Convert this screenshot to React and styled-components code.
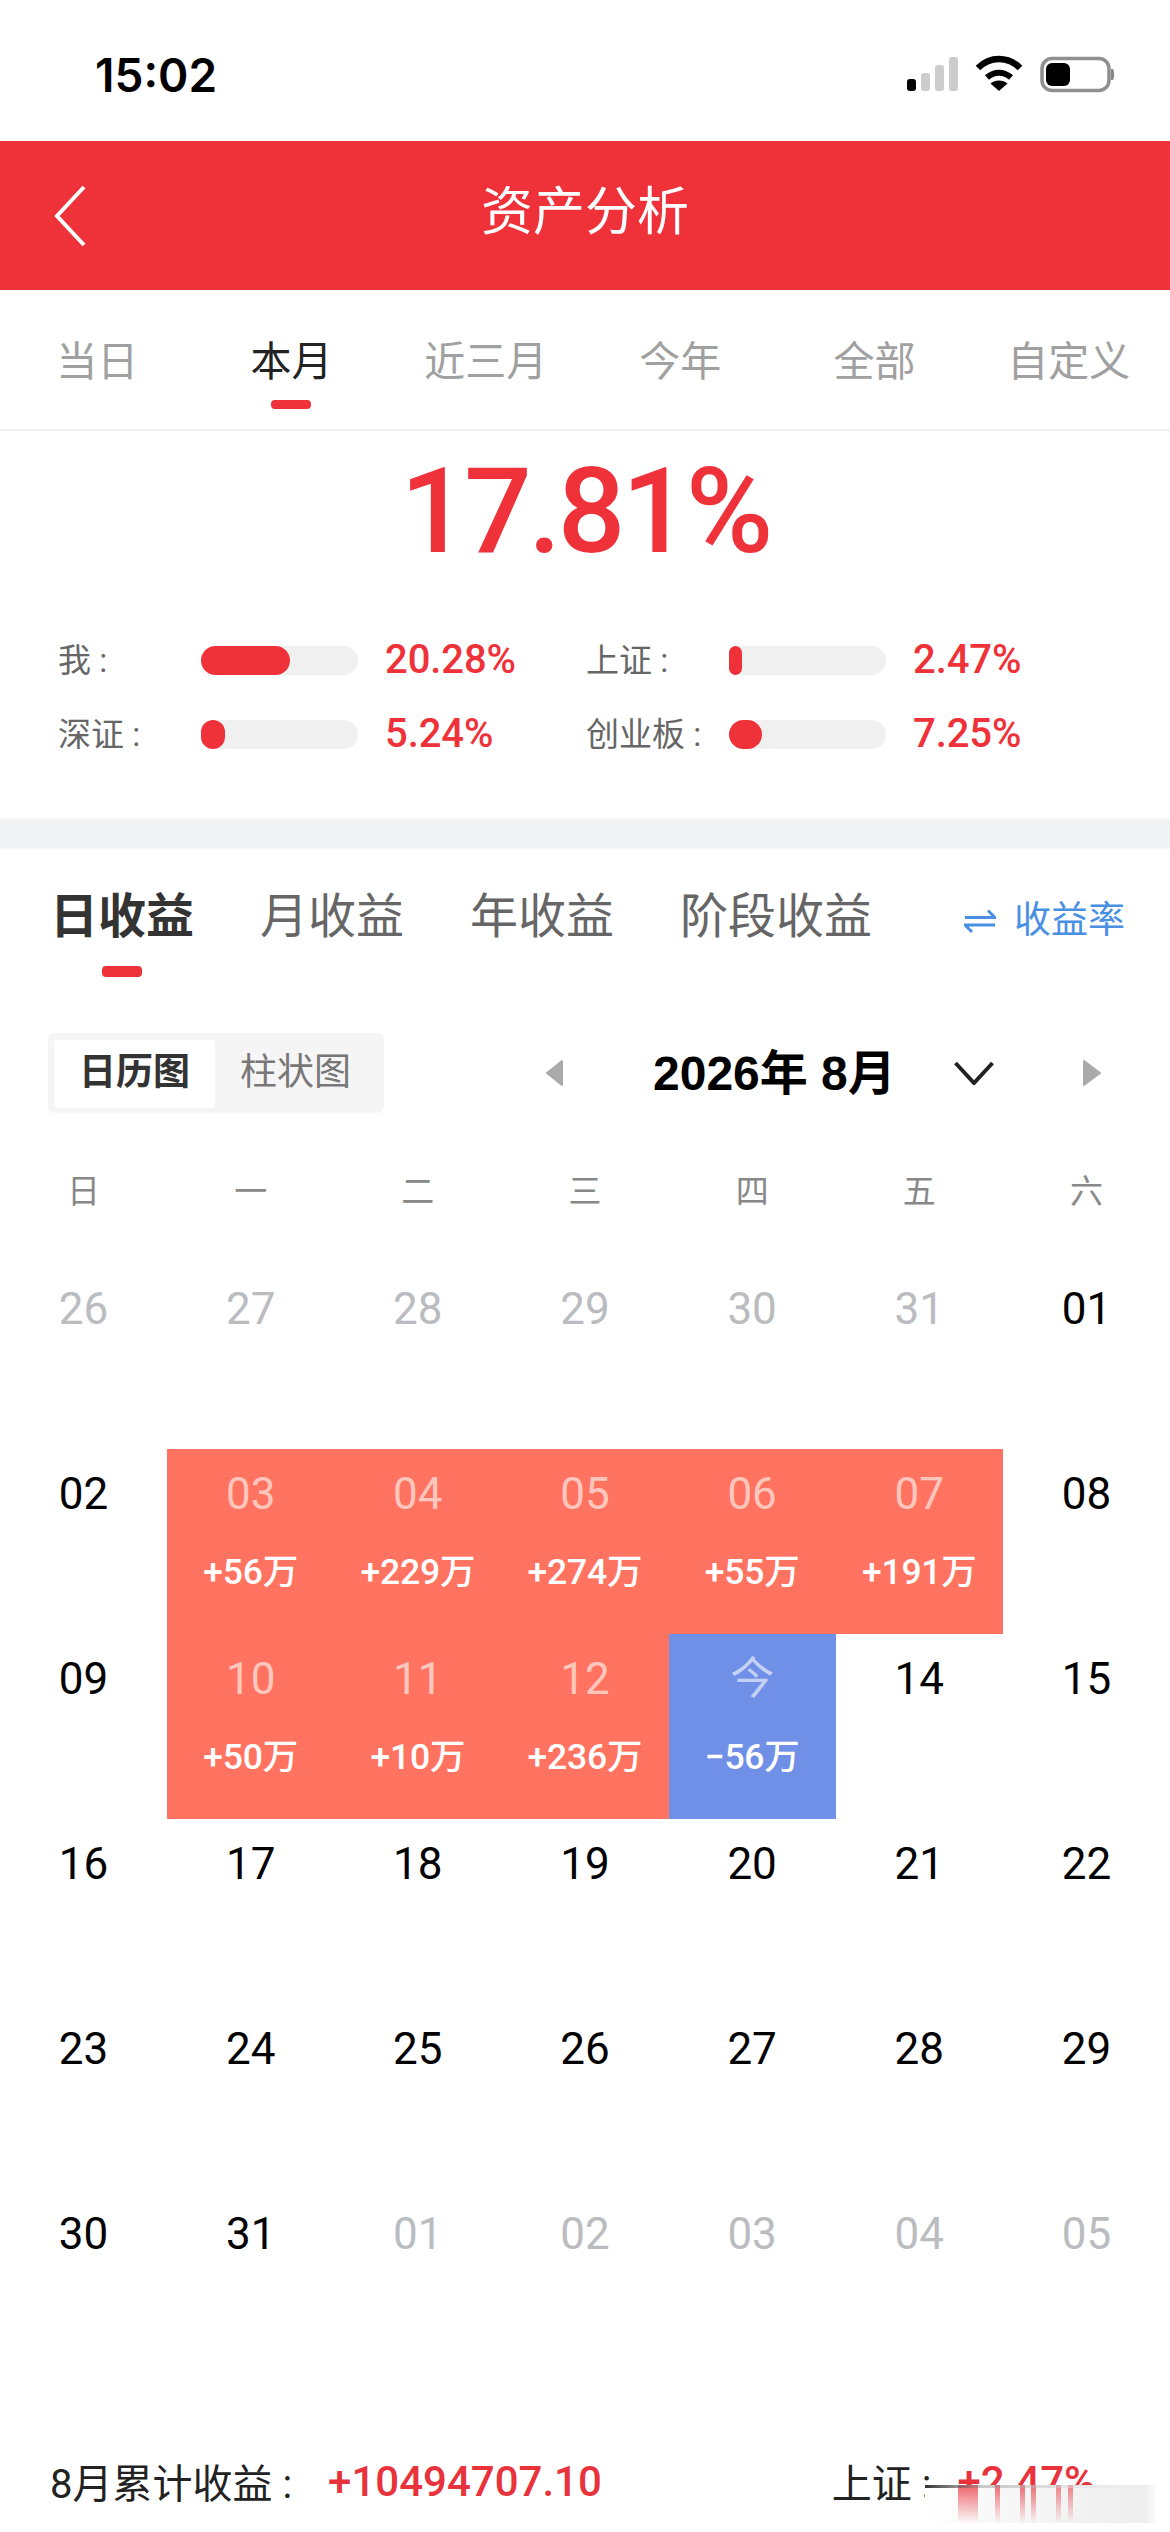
import React from 'react'
import styled, { createGlobalStyle } from 'styled-components'

const GlobalStyle = createGlobalStyle`
  html, body { margin: 0; padding: 0; background: #fff; }
  * { box-sizing: border-box; }
  body { font-family: Roboto, "Noto Sans CJK SC", sans-serif; }
`

const RED = '#ef323a'

const Page = styled.div`
  width: 1170px;
  height: 2532px;
  overflow: hidden;
  background: #fff;
  display: flex;
  flex-direction: column;
`

const StatusBar = styled.div`
  height: 141px;
  padding: 50px 55px 0 95px;
  display: flex;
  justify-content: space-between;
  align-items: flex-start;
`
const Clock = styled.span`
  font-family: Inter, sans-serif;
  font-weight: 600;
  font-size: 46px;
  line-height: 50px;
  color: #000;
`
const StatusIcons = styled.svg`
  display: block;
  margin-top: 5px;
`

const Header = styled.header`
  height: 149px;
  background: ${RED};
  display: grid;
  grid-template-columns: 1fr auto 1fr;
  align-items: center;
  padding: 0 54px;
`
const HeaderTitle = styled.h1`
  margin: -6px 0 0;
  font-size: 52px;
  font-weight: 400;
  line-height: 60px;
  color: #fff;
`

const RangeTabs = styled.nav`
  height: 141px;
  padding-right: 4px;
  display: grid;
  grid-template-columns: repeat(6, 1fr);
  border-bottom: 2px solid #f0f0f0;
`
const RangeTab = styled.div`
  display: flex;
  flex-direction: column;
  align-items: center;
  padding-top: 42px;
  font-size: 41px;
  line-height: 60px;
  color: ${p => (p.$active ? '#222' : '#a0a0a0')};
`
const Indicator = styled.i`
  display: block;
  width: ${p => p.$w || 40}px;
  height: ${p => p.$h || 9}px;
  margin-top: ${p => p.$top || 8}px;
  border-radius: 4px;
  background: ${RED};
`

const Summary = styled.section`
  height: 388px;
  display: flex;
  flex-direction: column;
`
const BigValue = styled.div`
  height: 162px;
  margin-bottom: 30px;
  text-align: center;
  font-size: 119px;
  font-weight: 500;
  line-height: 162px;
  letter-spacing: -3.6px;
  color: ${RED};
`
const StatGrid = styled.div`
  display: grid;
  grid-template-columns: 528px 1fr;
  grid-auto-rows: 74px;
  padding-left: 58px;
`
const Stat = styled.div`
  display: grid;
  grid-template-columns: 143px 157px auto;
  align-items: center;
`
const StatLabel = styled.span`
  margin-bottom: 5px;
  font-size: 33px;
  color: #666;
`
const Track = styled.div`
  height: 29px;
  border-radius: 15px;
  background: #f0f0f0;
`
const Fill = styled.div`
  height: 100%;
  border-radius: 15px;
  background: ${RED};
`
const StatValue = styled.span`
  margin-left: 27px;
  margin-bottom: 2px;
  font-size: 40px;
  font-weight: 500;
  letter-spacing: -0.1px;
  color: ${RED};
`

const Band = styled.div`
  height: 30px;
  background: #f2f3f5;
`

const ProfitTabs = styled.div`
  display: flex;
  align-items: flex-start;
  gap: 66px;
  padding: 36px 45px 0 50px;
`
const ProfitTab = styled.div`
  display: flex;
  flex-direction: column;
  align-items: center;
  font-size: 48px;
  line-height: 64px;
  font-weight: ${p => (p.$active ? 700 : 400)};
  color: ${p => (p.$active ? '#333' : '#666')};
`
const RateSwitch = styled.div`
  margin-left: auto;
  padding-top: 4px;
  display: flex;
  align-items: center;
  gap: 18px;
  font-size: 37px;
  line-height: 64px;
  color: #4a90e2;
`

const Toolbar = styled.div`
  margin-top: 56px;
  height: 80px;
  padding-left: 48px;
  display: flex;
  align-items: center;
`
const Toggle = styled.div`
  width: 336px;
  height: 80px;
  padding: 7px 0 5px 6px;
  display: flex;
  border-radius: 6px;
  background: #f5f5f5;
`
const ToggleItem = styled.div`
  width: 161px;
  border-radius: 4px;
  text-align: center;
  font-size: 37px;
  line-height: 66px;
  background: ${p => (p.$active ? '#fff' : 'transparent')};
  color: ${p => (p.$active ? '#333' : '#777')};
  font-weight: ${p => (p.$active ? 700 : 400)};
`
const NavIcon = styled.svg`
  display: block;
  flex: none;
  margin-left: ${p => p.$left}px;
`
const MonthTitle = styled.div`
  margin: 2px 0 0 89px;
  width: 237px;
  font-family: "Liberation Sans", "Noto Sans CJK SC", sans-serif;
  font-size: 48px;
  font-weight: 700;
  line-height: 60px;
  white-space: nowrap;
  color: #000;
`

const WeekRow = styled.div`
  margin-top: 47px;
  display: grid;
  grid-template-columns: repeat(7, 1fr);
  height: 64px;
  text-align: center;
  font-size: 33px;
  line-height: 64px;
  color: #888;
`

const CalendarGrid = styled.div`
  margin-top: 40px;
  display: grid;
  grid-template-columns: repeat(7, 1fr);
  grid-auto-rows: 185px;
`
const Cell = styled.div`
  display: flex;
  flex-direction: column;
  align-items: center;
  padding-top: 15px;
  background: ${p => (p.$tone === 'up' ? '#ff7360' : p.$tone === 'down' ? '#6f90e6' : 'transparent')};
`
const DayNum = styled.span`
  font-size: 44px;
  line-height: 60px;
  color: ${p => (p.$tone ? 'rgba(255,255,255,.62)' : p.$muted ? '#bbbcc0' : '#000')};
`
const Amount = styled.span`
  margin-top: 23px;
  font-size: 35.5px;
  font-weight: 500;
  line-height: 50px;
  letter-spacing: -0.2px;
  color: #fff;
`

const Footer = styled.div`
  position: relative;
  margin-top: 77px;
  height: 60px;
  padding-left: 50px;
  display: flex;
  align-items: center;
  font-size: 40px;
  color: #222;
`
const FooterValue = styled.span`
  margin-left: ${p => p.$left}px;
  font-size: 42px;
  font-weight: 500;
  color: #e8323c;
  white-space: nowrap;
`
const FooterLabel = styled.span`
  margin-left: ${p => p.$left || 0}px;
  white-space: nowrap;
`
// the smeared watermark over the bottom right corner, text below it runs out as streaks
const Smear = styled.div`
  position: absolute;
  left: 925px;
  top: 34px;
  width: 232px;
  height: 38px;
  background:
    linear-gradient(to right, #333, rgba(120,120,120,.4) 50px, rgba(220,220,220,.5) 150px, transparent 220px) 0 0 / 100% 3px no-repeat,
    linear-gradient(to bottom, rgba(232,50,60,.75), rgba(232,50,60,0)) 33px 0 / 20px 100% no-repeat,
    linear-gradient(to bottom, rgba(232,50,60,.7), rgba(232,50,60,0)) 70px 0 / 5px 100% no-repeat,
    linear-gradient(to bottom, rgba(232,50,60,.7), rgba(232,50,60,0)) 95px 0 / 5px 100% no-repeat,
    linear-gradient(to bottom, rgba(232,50,60,.7), rgba(232,50,60,0)) 106px 0 / 5px 100% no-repeat,
    linear-gradient(to bottom, rgba(232,50,60,.6), rgba(232,50,60,0)) 131px 0 / 5px 100% no-repeat,
    linear-gradient(to bottom, rgba(232,50,60,.6), rgba(232,50,60,0)) 143px 0 / 5px 100% no-repeat,
    linear-gradient(to right, #fff, #f6f6f6 40%, #eee 95%, #fff);
`

const WEEK = ['日', '一', '二', '三', '四', '五', '六']
const RANGES = ['当日', '本月', '近三月', '今年', '全部', '自定义']
const PROFITS = ['日收益', '月收益', '年收益', '阶段收益']

const STATS = [
  { label: '我 :', pct: 57, value: '20.28%' },
  { label: '上证 :', pct: 8, value: '2.47%' },
  { label: '深证 :', pct: 15, value: '5.24%' },
  { label: '创业板 :', pct: 21, value: '7.25%' },
]

const DAYS = [
  ['26', 1], ['27', 1], ['28', 1], ['29', 1], ['30', 1], ['31', 1], ['01'],
  ['02'], ['03', 0, 'up', '+56万'], ['04', 0, 'up', '+229万'], ['05', 0, 'up', '+274万'], ['06', 0, 'up', '+55万'], ['07', 0, 'up', '+191万'], ['08'],
  ['09'], ['10', 0, 'up', '+50万'], ['11', 0, 'up', '+10万'], ['12', 0, 'up', '+236万'], ['今', 0, 'down', '−56万'], ['14'], ['15'],
  ['16'], ['17'], ['18'], ['19'], ['20'], ['21'], ['22'],
  ['23'], ['24'], ['25'], ['26'], ['27'], ['28'], ['29'],
  ['30'], ['31'], ['01', 1], ['02', 1], ['03', 1], ['04', 1], ['05', 1],
]

function StatusGlyphs() {
  return (
    <StatusIcons width="210" height="40" viewBox="0 0 210 40">
      <rect x="2" y="24" width="9" height="12" rx="3" fill="#000" />
      <rect x="16" y="18" width="9" height="18" rx="3" fill="#ccc" />
      <rect x="30" y="10" width="9" height="26" rx="3" fill="#ccc" />
      <rect x="44" y="2" width="9" height="34" rx="3" fill="#ccc" />
      <g transform="translate(70 0)">
        <path d="M3 13 C15 1 33 1 45 13" fill="none" stroke="#000" strokeWidth="6.5" />
        <path d="M12 22.5 C19 16 29 16 36 22.5" fill="none" stroke="#000" strokeWidth="6" />
        <path d="M24 36 L15.5 28.5 C20 24.5 28 24.5 32.5 28.5 Z" fill="#000" />
      </g>
      <rect x="137" y="3.5" width="67" height="32" rx="10" fill="#fff" stroke="#8f8f8f" strokeWidth="3.5" />
      <rect x="141" y="8" width="24" height="23" rx="6" fill="#000" />
      <path d="M206 14 L208 14 C209.5 16 209.5 23 208 25 L206 25 Z" fill="#888" />
    </StatusIcons>
  )
}

export default function App() {
  return (
    <Page>
      <GlobalStyle />
      <StatusBar>
        <Clock>15:02</Clock>
        <StatusGlyphs />
      </StatusBar>

      <Header>
        <svg width="32" height="62" viewBox="0 0 32 62">
          <path d="M30 2 L3 31 L30 60" fill="none" stroke="#fff" strokeWidth="4" />
        </svg>
        <HeaderTitle>资产分析</HeaderTitle>
      </Header>

      <RangeTabs>
        {RANGES.map((r, i) => (
          <RangeTab key={r} $active={i === 1}>
            {r}
            {i === 1 && <Indicator />}
          </RangeTab>
        ))}
      </RangeTabs>

      <Summary>
        <BigValue>17.81%</BigValue>
        <StatGrid>
          {STATS.map(s => (
            <Stat key={s.label}>
              <StatLabel>{s.label}</StatLabel>
              <Track>
                <Fill style={{ width: `${s.pct}%` }} />
              </Track>
              <StatValue>{s.value}</StatValue>
            </Stat>
          ))}
        </StatGrid>
      </Summary>

      <Band />

      <ProfitTabs>
        {PROFITS.map((p, i) => (
          <ProfitTab key={p} $active={i === 0}>
            {p}
            {i === 0 && <Indicator $h={11} $top={17} />}
          </ProfitTab>
        ))}
        <RateSwitch>
          <svg width="32" height="26" viewBox="0 0 32 26">
            <path d="M1 9.5 H31 L24 2.5 M31 17 H1 L8 24" fill="none" stroke="#4a90e2" strokeWidth="3" />
          </svg>
          收益率
        </RateSwitch>
      </ProfitTabs>

      <Toolbar>
        <Toggle>
          <ToggleItem $active>日历图</ToggleItem>
          <ToggleItem>柱状图</ToggleItem>
        </Toggle>
        <NavIcon $left={161} width="19" height="28" viewBox="0 0 19 28">
          <path d="M17 2 L2 14 L17 26 Z" fill="#aaa" stroke="#aaa" strokeWidth="2" strokeLinejoin="round" />
        </NavIcon>
        <MonthTitle>2026年 8月</MonthTitle>
        <NavIcon $left={64} width="40" height="24" viewBox="0 0 40 24">
          <path d="M1.5 2 L20 22 L38.5 2" fill="none" stroke="#222" strokeWidth="4" />
        </NavIcon>
        <NavIcon $left={88} width="20" height="28" viewBox="0 0 20 28">
          <path d="M2 2 L18 14 L2 26 Z" fill="#aaa" stroke="#aaa" strokeWidth="2" strokeLinejoin="round" />
        </NavIcon>
      </Toolbar>

      <WeekRow>
        {WEEK.map(w => (
          <span key={w}>{w}</span>
        ))}
      </WeekRow>

      <CalendarGrid>
        {DAYS.map(([day, muted, tone, amount], i) => (
          <Cell key={i} $tone={tone}>
            <DayNum $muted={muted} $tone={tone}>{day}</DayNum>
            {amount && <Amount>{amount}</Amount>}
          </Cell>
        ))}
      </CalendarGrid>

      <Footer>
        <FooterLabel>8月累计收益 :</FooterLabel>
        <FooterValue $left={36}>+10494707.10</FooterValue>
        <FooterLabel $left={230}>上证 :</FooterLabel>
        <FooterValue $left={26}>+2.47%</FooterValue>
        <Smear />
      </Footer>
    </Page>
  )
}
